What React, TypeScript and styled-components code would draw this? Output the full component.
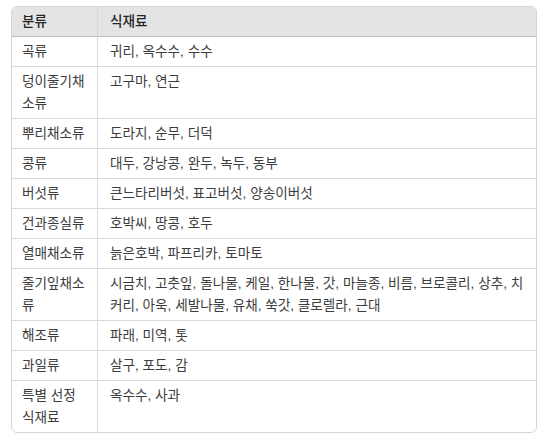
import React from 'react';
import styled, { createGlobalStyle } from 'styled-components';

const GlobalStyle = createGlobalStyle`
    html, body {
        margin: 0;
        padding: 0;
        background: #ffffff;
    }
`;

const Page = styled.div`
    padding: 6px 12px 0 11px;
    font-family: 'Liberation Sans', 'Noto Sans CJK KR', sans-serif;
    font-size: 13.6px;
`;

const Table = styled.table`
    width: 526px;
    table-layout: fixed;
    border-collapse: separate;
    border-spacing: 0;
    border: 1px solid #d6d6d6;
    border-radius: 6px;
    overflow: hidden;
`;

const HeadCell = styled.th<{ $first?: boolean }>`
    width: ${({ $first }) => ($first ? '65px' : 'auto')};
    height: 29px;
    padding: 0 ${({ $first }) => ($first ? '10px' : '12px')};
    background: #e4e4e4;
    border-bottom: 1px solid #bfbfbf;
    border-right: ${({ $first }) => ($first ? '1px solid #d6d6d6' : 'none')};
    color: #262626;
    font-weight: 500;
    text-align: left;
    line-height: 22px;
`;

const Cell = styled.td<{ $first?: boolean; $last?: boolean }>`
    padding: 4px ${({ $first }) => ($first ? '10px' : '12px')} 3px;
    border-bottom: ${({ $last }) => ($last ? 'none' : '1px solid #d9d9d9')};
    border-right: ${({ $first }) => ($first ? '1px solid #d9d9d9' : 'none')};
    color: #3d3d3d;
    line-height: 22px;
    vertical-align: top;
`;

const rows: [string, string][] = [
    ['곡류', '귀리, 옥수수, 수수'],
    ['덩이줄기채소류', '고구마, 연근'],
    ['뿌리채소류', '도라지, 순무, 더덕'],
    ['콩류', '대두, 강낭콩, 완두, 녹두, 동부'],
    ['버섯류', '큰느타리버섯, 표고버섯, 양송이버섯'],
    ['건과종실류', '호박씨, 땅콩, 호두'],
    ['열매채소류', '늙은호박, 파프리카, 토마토'],
    ['줄기잎채소류', '시금치, 고춧잎, 돌나물, 케일, 한나물, 갓, 마늘종, 비름, 브로콜리, 상추, 치커리, 아욱, 세발나물, 유채, 쑥갓, 클로렐라, 근대'],
    ['해조류', '파래, 미역, 톳'],
    ['과일류', '살구, 포도, 감'],
    ['특별 선정 식재료', '옥수수, 사과'],
];

const App: React.FC = () => (
    <Page>
        <GlobalStyle />
        <Table>
            <thead>
                <tr>
                    <HeadCell $first>분류</HeadCell>
                    <HeadCell>식재료</HeadCell>
                </tr>
            </thead>
            <tbody>
                {rows.map(([kind, items], i) => (
                    <tr key={kind}>
                        <Cell $first $last={i === rows.length - 1}>{kind}</Cell>
                        <Cell $last={i === rows.length - 1}>{items}</Cell>
                    </tr>
                ))}
            </tbody>
        </Table>
    </Page>
);

export default App;
